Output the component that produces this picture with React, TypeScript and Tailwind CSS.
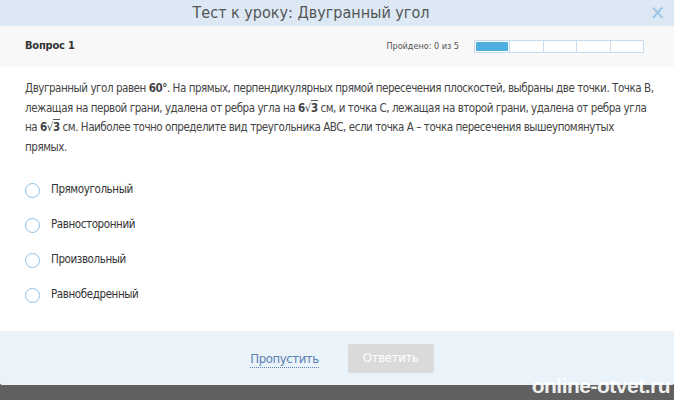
import React from "react";

const font = { fontFamily: '"DejaVu Sans Condensed", "Liberation Sans", sans-serif' };

function Sqrt3() {
  return (
    <span className="font-bold whitespace-nowrap">
      6<span className="font-normal">√</span><span className="border-t border-[#555]">3</span>
    </span>
  );
}

const options = ["Прямоугольный", "Равносторонний", "Произвольный", "Равнобедренный"];

export default function App() {
  return (
    <div className="w-[674px] h-[400px] bg-[#606060] relative overflow-hidden" style={font}>
      <div className="bg-white rounded-b-[3px] overflow-hidden">
        <div className="h-[26px] bg-[#dce9f5] flex items-center justify-center pr-[52px] relative">
          <span className="text-[16px] text-[#555]">Тест к уроку: Двугранный угол</span>
          <span className="absolute right-[9px] top-[2px] text-[#9cc4e6] text-[20px] font-bold leading-[22px]">✕</span>
        </div>
        <div className="h-[41px] bg-[#f8f8f8] flex items-center pl-[25px] pr-[30px]">
          <span className="text-[11px] font-bold text-[#333] tracking-[-0.2px]">Вопрос 1</span>
          <span className="ml-auto text-[9px] text-[#555]">Пройдено: 0 из 5</span>
          <div className="ml-[15px] flex w-[170px] h-[13px] border border-[#c7dcee] bg-white">
            <div className="flex-1 border-r border-[#c7dcee] p-[1px]"><div className="w-full h-full bg-[#4fafe0]" /></div>
            <div className="flex-1 border-r border-[#c7dcee]" />
            <div className="flex-1 border-r border-[#c7dcee]" />
            <div className="flex-1 border-r border-[#c7dcee]" />
            <div className="flex-1" />
          </div>
        </div>
        <div className="h-[264px] pl-[25px] pr-[12px] pt-[12px]">
          <p className="text-[11.5px] leading-[19.5px] text-[#444] tracking-[-0.45px]">
            Двугранный угол равен <b>60°</b>. На прямых, перпендикулярных прямой пересечения плоскостей, выбраны две точки. Точка B,
            <br />
            лежащая на первой грани, удалена от ребра угла на <Sqrt3 /> см, и точка C, лежащая на второй грани, удалена от ребра угла
            <br />
            на <Sqrt3 /> см. Наиболее точно определите вид треугольника ABC, если точка A – точка пересечения вышеупомянутых
            <br />
            прямых.
          </p>
          <div className="mt-[25px] flex flex-col gap-[19px]">
            {options.map((o) => (
              <div key={o} className="flex items-center h-[16px]">
                <div className="w-[15px] h-[15px] rounded-full border-[1.5px] border-[#8ec0e6] bg-white" />
                <span className="ml-[11px] text-[11.5px] text-[#333] tracking-[-0.4px]">{o}</span>
              </div>
            ))}
          </div>
        </div>
        <div className="h-[54px] bg-[#eaf2fa] flex items-center justify-center gap-[29px] pl-[10px]">
          <span className="text-[13px] text-[#5a82b4] border-b border-dotted border-[#5a82b4] leading-[16px] mt-[2px] tracking-[-0.4px]">Пропустить</span>
          <div className="w-[86px] h-[29px] bg-[#dadada] rounded-[2px] flex items-center justify-center text-[13px] text-white tracking-[-0.3px]">Ответить</div>
        </div>
      </div>
      <span className="absolute right-[4px] top-[375px] text-[21px] font-bold text-white/90 leading-none tracking-[-0.5px]" style={{ fontFamily: '"Liberation Sans", sans-serif' }}>online-otvet.ru</span>
    </div>
  );
}
